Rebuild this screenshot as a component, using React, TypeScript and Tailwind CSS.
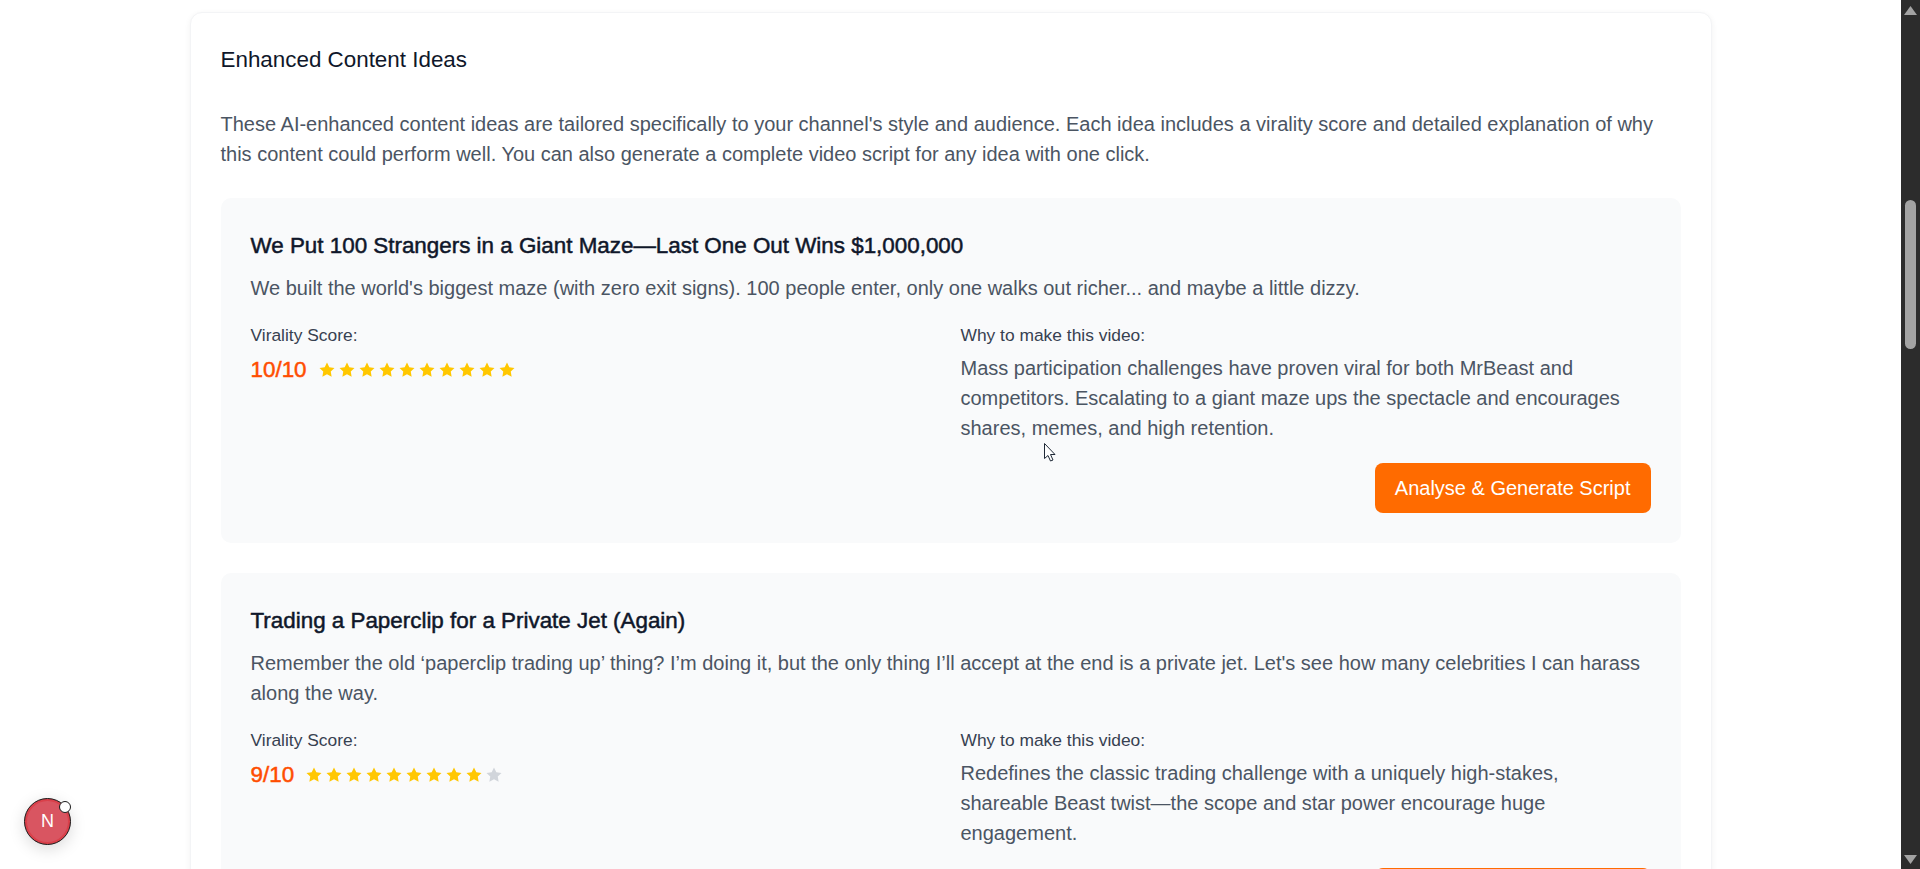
import { Fragment } from 'react'

const ideas = [
  {
    title: 'We Put 100 Strangers in a Giant Maze—Last One Out Wins $1,000,000',
    text: "We built the world's biggest maze (with zero exit signs). 100 people enter, only one walks out richer... and maybe a little dizzy.",
    score: 10,
    why: 'Mass participation challenges have proven viral for both MrBeast and competitors. Escalating to a giant maze ups the spectacle and encourages shares, memes, and high retention.',
  },
  {
    title: 'Trading a Paperclip for a Private Jet (Again)',
    text: "Remember the old ‘paperclip trading up’ thing? I’m doing it, but the only thing I’ll accept at the end is a private jet. Let's see how many celebrities I can harass along the way.",
    score: 9,
    why: 'Redefines the classic trading challenge with a uniquely high-stakes, shareable Beast twist—the scope and star power encourage huge engagement.',
  },
]

function Star({ on }: { on: boolean }) {
  return (
    <svg viewBox="0 0 24 24" className={`w-[18px] h-[18px] ${on ? 'fill-[#ffc700]' : 'fill-[#d1d5db]'}`}>
      <path d="M12 2l3.09 6.26L22 9.27l-5 4.87 1.18 6.88L12 17.77l-6.18 3.25L7 14.14 2 9.27l6.91-1.01L12 2z" />
    </svg>
  )
}

function IdeaCard({ title, text, score, why }: (typeof ideas)[number]) {
  return (
    <div className="bg-[#f9fafb] rounded-[10px] p-[30px]">
      <h3 className="text-[22.4px] leading-[36px] font-normal text-[#0f172a] [-webkit-text-stroke:0.5px_#0f172a]">{title}</h3>
      <p className="text-[20px] leading-[30px] text-[#4b5563] mt-[9px]">{text}</p>
      <div className="grid grid-cols-2 gap-5 mt-[18px]">
        <div>
          <div className="text-[17.4px] leading-[28px] text-[#374151]">Virality Score:</div>
          <div className="flex items-center gap-[11px] mt-[6px]">
            <span className="text-[22.4px] leading-[30px] font-normal text-[#ff4d00] [-webkit-text-stroke:0.5px_#ff4d00]">{score}/10</span>
            <div className="flex gap-[2px]">
              {Array.from({ length: 10 }, (_, i) => <Star key={i} on={i < score} />)}
            </div>
          </div>
        </div>
        <div>
          <div className="text-[17.4px] leading-[28px] text-[#374151]">Why to make this video:</div>
          <p className="text-[20px] leading-[30px] text-[#4b5563] mt-1">{why}</p>
        </div>
      </div>
      <div className="flex justify-end mt-5">
        <button className="h-[50px] px-5 rounded-lg bg-[#ff6b00] text-white text-[20px]">Analyse &amp; Generate Script</button>
      </div>
    </div>
  )
}

export default function App() {
  return (
    <div className="h-[869px] flex overflow-hidden bg-white relative font-['Liberation_Sans',sans-serif]">
      <div className="flex-1 min-w-0 pt-3">
        <div className="w-[1522px] mx-auto rounded-t-[12px] border border-[#f3f4f6] shadow-[0_2px_6px_rgba(0,0,0,0.06)] bg-white p-[30px]">
          <h2 className="text-[22.4px] leading-[34px] font-normal text-[#0f172a]">Enhanced Content Ideas</h2>
          <p className="text-[20px] leading-[30px] text-[#4b5563] mt-8">
            These AI-enhanced content ideas are tailored specifically to your channel's style and audience. Each idea includes a virality score and detailed explanation of why this content could perform well. You can also generate a complete video script for any idea with one click.
          </p>
          <div className="flex flex-col gap-[30px] mt-[29px]">
            {ideas.map(idea => (
              <Fragment key={idea.title}>
                <IdeaCard {...idea} />
              </Fragment>
            ))}
          </div>
        </div>
      </div>

      {/* fake dark scrollbar */}
      <div className="w-[19px] shrink-0 bg-[#2c2c2c] flex flex-col items-center pt-[6px] pb-[5px]">
        <svg viewBox="0 0 13 9" className="w-[13px] h-[9px] fill-[#a3a3a3]"><path d="M6.5 0L13 9H0z" /></svg>
        <div className="w-[11px] h-[149px] rounded-full bg-[#a3a3a3] mt-[185px]" />
        <svg viewBox="0 0 13 9" className="w-[13px] h-[9px] fill-[#a3a3a3] mt-auto"><path d="M0 0h13L6.500 9z" /></svg>
      </div>

      {/* next dev badge */}
      <div className="absolute left-[24px] top-[798px] w-[47px] h-[47px] rounded-full bg-[#d9404a] border border-[#1a1a1a] shadow-[0_4px_16px_rgba(0,0,0,0.15)] flex items-center justify-center">
        <div className="w-[41px] h-[41px] rounded-full bg-[#d95561] flex items-center justify-center text-white text-[18px] font-normal">N</div>
        <div className="absolute right-[-1px] top-[2px] w-[12px] h-[12px] rounded-full bg-white border border-[#1a1a1a]" />
      </div>

      {/* mouse cursor */}
      <svg viewBox="0 0 12 19" className="absolute left-[1044px] top-[443px] w-[12px] h-[19px]">
        <path d="M0.500 0.500V15.500L4 12.500L6.500 18L9 17L6.500 11.500H11z" fill="#fff" stroke="#1f2937" strokeWidth="1" />
      </svg>
    </div>
  )
}
